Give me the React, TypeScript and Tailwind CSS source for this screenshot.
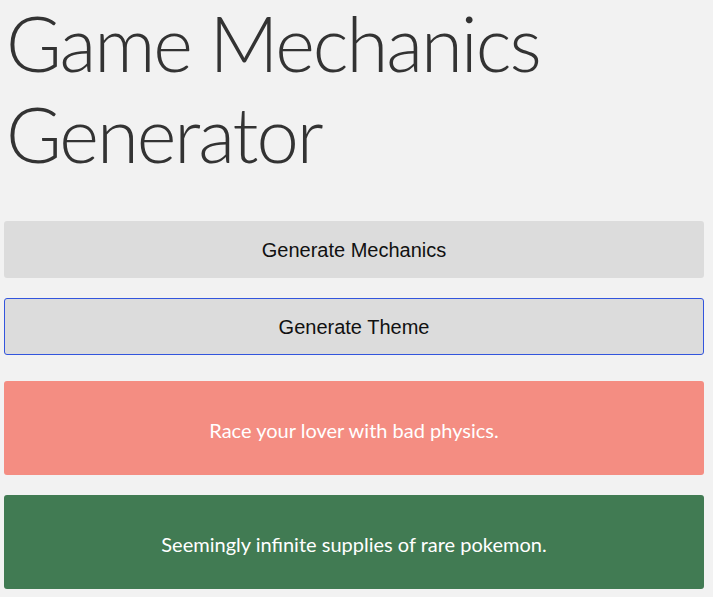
export default function App() {
  return (
    <div className="min-h-[597px] bg-[#f2f2f2] px-[4px] pt-0 pb-2">
      <h1 className="m-0 -mt-[3px] pl-[2px] font-['Lato',sans-serif] text-[76px] font-light leading-[91px] tracking-[-0.027em] text-[#333]">
        Game Mechanics Generator
      </h1>
      <div className="mt-[42px] w-[700px]">
        <button
          type="button"
          className="block h-[57px] w-full rounded-[3px] bg-[#dcdcdc] font-['Liberation_Sans',Arial,sans-serif] text-[20px] text-[#111]"
        >
          Generate Mechanics
        </button>
        <button
          type="button"
          className="mt-[20px] block h-[57px] w-full rounded-[3px] border border-[#3355dd] bg-[#dcdcdc] font-['Liberation_Sans',Arial,sans-serif] text-[20px] text-[#111]"
        >
          Generate Theme
        </button>
        <div className="mt-[26px] flex h-[94px] items-center justify-center rounded-[3px] bg-[#f48d82] pt-[3px] font-['Lato',sans-serif] text-[20px] text-white">
          Race your lover with bad physics.
        </div>
        <div className="mt-[20px] flex h-[94px] items-center justify-center rounded-[3px] bg-[#417b53] pt-[3px] font-['Lato',sans-serif] text-[20px] text-white">
          Seemingly infinite supplies of rare pokemon.
        </div>
      </div>
    </div>
  )
}
